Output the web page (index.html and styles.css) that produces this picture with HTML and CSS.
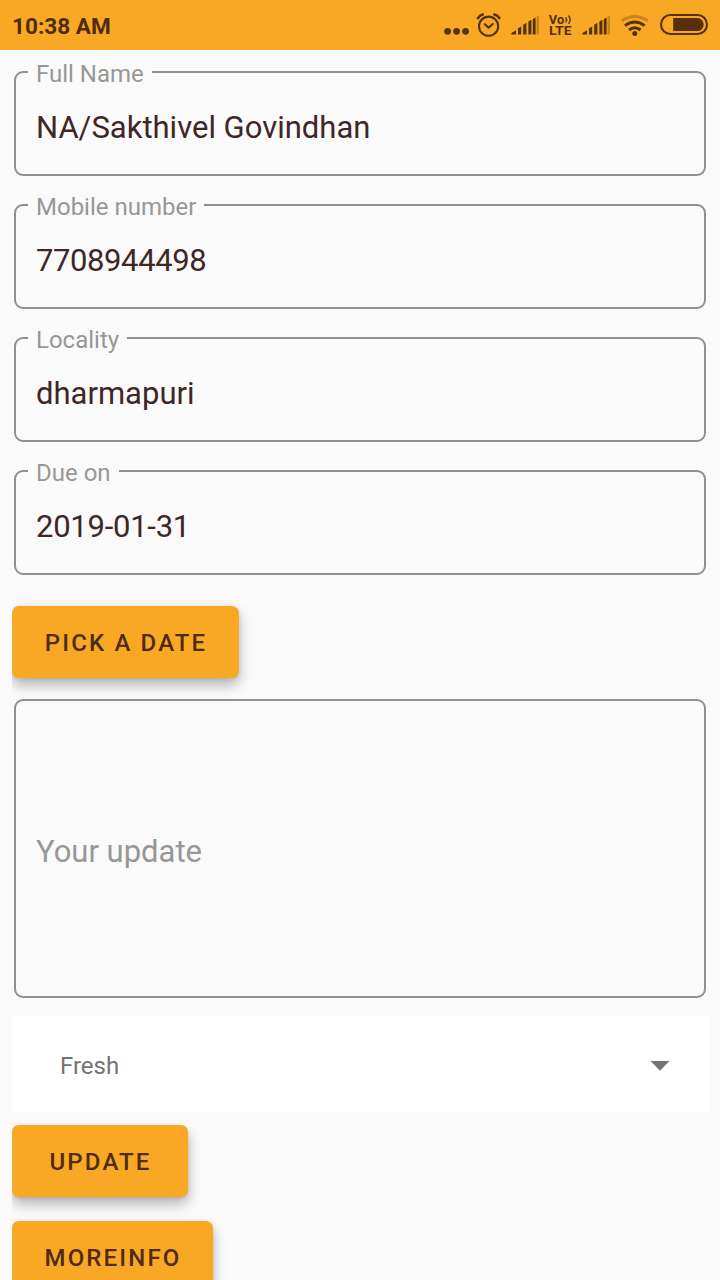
FILE: index.html
```html
<!DOCTYPE html>
<html lang="en">
<head>
<meta charset="utf-8">
<title>Update details</title>
<link rel="stylesheet" href="styles.css">
</head>
<body>
<header class="status">
  <span class="time">10:38 AM</span>
  <div class="icons">
    <svg width="32" height="50" viewBox="440 0 32 50"><g class="ink"><circle cx="447.6" cy="31.3" r="3.4"/><circle cx="456.6" cy="31.3" r="3.4"/><circle cx="465.6" cy="31.3" r="3.4"/></g></svg>
    <svg width="34" height="50" viewBox="472 0 34 50"><g class="line"><circle cx="488.6" cy="26.2" r="9.6"/><path d="M484.8 24.2l3.8 3.4 4.2-3.6"/><path class="ear" d="M478 18.2q1.6-2.8 4.8-3.6M494.4 14.6q3.4.8 5 3.6"/></g></svg>
    <svg width="38" height="50" viewBox="506 0 38 50"><g class="ink"><path d="M511.4 34.6v-1.6l4.6-2.8v4.4zM518 34.6v-6.4l3.2-1.6v8zM523.2 34.6v-9.8l3.2-1.8v11.6zM528.4 34.6v-13l3-1.8v14.8zM532.8 34.6v-15.4l2.8-1.8v17.2z"/><path class="faint" d="M536.6 34.6V17l2.4-1.8v19.4z"/></g></svg>
    <svg width="32" height="50" viewBox="544 0 32 50"><g class="ink volte"><text x="548.8" y="23.6" textLength="15.4" lengthAdjust="spacingAndGlyphs">Vo</text><text x="549" y="35" textLength="22.5" lengthAdjust="spacingAndGlyphs">LTE</text></g><path class="line wave" d="M566 17.6q1.4 2.2 0 4.4M568.8 16q2.6 3.6 0 7.4"/></svg>
    <svg width="38" height="50" viewBox="505 0 38 50"><g class="ink"><path d="M511.4 34.6v-1.6l4.6-2.8v4.4zM518 34.6v-6.4l3.2-1.6v8zM523.2 34.6v-9.8l3.2-1.8v11.6zM528.4 34.6v-13l3-1.8v14.8zM532.8 34.6v-15.4l2.8-1.8v17.2z"/><path class="faint" d="M536.6 34.6V17l2.4-1.8v19.4z"/></g></svg>
    <svg width="40" height="50" viewBox="614 0 40 50"><path class="line wifi faint" d="M621.8 20.8q13-8.6 26 0"/><path class="line wifi" d="M625 25.6q9.8-7.2 19.6 0M629 30q5.8-4.4 11.6 0"/><circle class="ink" cx="634.8" cy="33.4" r="2.5"/></svg>
    <svg width="66" height="50" viewBox="654 0 66 50"><rect class="line" x="661" y="15" width="46" height="19" rx="9.5"/><path class="ink" d="M673.2 18.1h24a6.5 6.5 0 0 1 0 13h-24z"/></svg>
  </div>
</header>
<main class="form">
  <div class="field"><span class="label">Full Name</span><span class="value">NA/Sakthivel Govindhan</span></div>
  <div class="field"><span class="label">Mobile number</span><span class="value digits">7708944498</span></div>
  <div class="field"><span class="label">Locality</span><span class="value">dharmapuri</span></div>
  <div class="field"><span class="label">Due on</span><span class="value date">2019-01-31</span></div>
  <button class="btn pick">PICK A DATE</button>
  <div class="field area"><span class="value hint">Your update</span></div>
  <div class="select"><span>Fresh</span><svg width="20" height="10" viewBox="0 0 20 10"><path d="M.6 0h18.8L10 9.8z"/></svg></div>
  <button class="btn update">UPDATE</button>
  <button class="btn more">MOREINFO</button>
</main>
</body>
</html>
```
FILE: styles.css
```css
* { box-sizing: border-box; }
html, body { margin: 0; height: 1280px; overflow: hidden; }
body { background: #fafafa; font-family: Roboto, sans-serif; }
.status { display: flex; justify-content: space-between; height: 50px; background: #f9a825; color: #4f2b0b; }
.time { padding-left: 12px; font-size: 22.6px; font-weight: 700; line-height: 53px; }
.icons { display: flex; }
.ink { fill: #56300a; }
.line { fill: none; stroke: #56300a; stroke-width: 2.1; stroke-linecap: round; stroke-linejoin: round; }
.ear { stroke-width: 2.6; }
.wave { stroke-width: 1.3; }
.wifi { stroke-width: 3; stroke-linecap: butt; }
.faint { opacity: .3; }
.volte { font: 700 12px/1 Roboto, sans-serif; }
.form { display: flex; flex-direction: column; align-items: flex-start; padding: 21px 12px 0; }
.field { position: relative; display: flex; align-items: center; width: 692px; height: 105px; margin: 0 2px 28px; padding: 8px 20px 0; border: 2px solid #8f8f8f; border-radius: 9px; }
.label { position: absolute; left: 12px; top: -14px; padding: 0 8px; background: #fafafa; color: #979797; font-size: 24px; line-height: 30px; white-space: nowrap; }
.value { color: #3e2727; font-size: 31px; line-height: 40px; white-space: nowrap; }
.digits { letter-spacing: -.4px; }
.date { letter-spacing: -.25px; }
.btn { height: 72px; flex: none; padding: 2px 0 0; border: 0; border-radius: 7px; background: #f9a825; color: #4e2b12; font: 500 24px Roboto, sans-serif; letter-spacing: 2.15px; text-indent: 1px; box-shadow: 0 7px 13px rgba(0,0,0,.28), 0 1px 4px rgba(0,0,0,.1); clip-path: inset(-20px -20px -24px 0); }
.pick { width: 227px; margin-top: 3px; }
.area { height: 299px; margin: 21px 2px 18px; }
.hint { color: #979797; }
.area { padding-top: 7px; }
.select { display: flex; align-items: center; justify-content: space-between; width: 697px; height: 96px; padding: 3px 39px 0 48px; background: #fff; color: #737373; font-size: 24px; }
.select svg { fill: #757575; }
.update { width: 176px; margin-top: 13px; }
.more { width: 201px; margin-top: 24px; }
```
